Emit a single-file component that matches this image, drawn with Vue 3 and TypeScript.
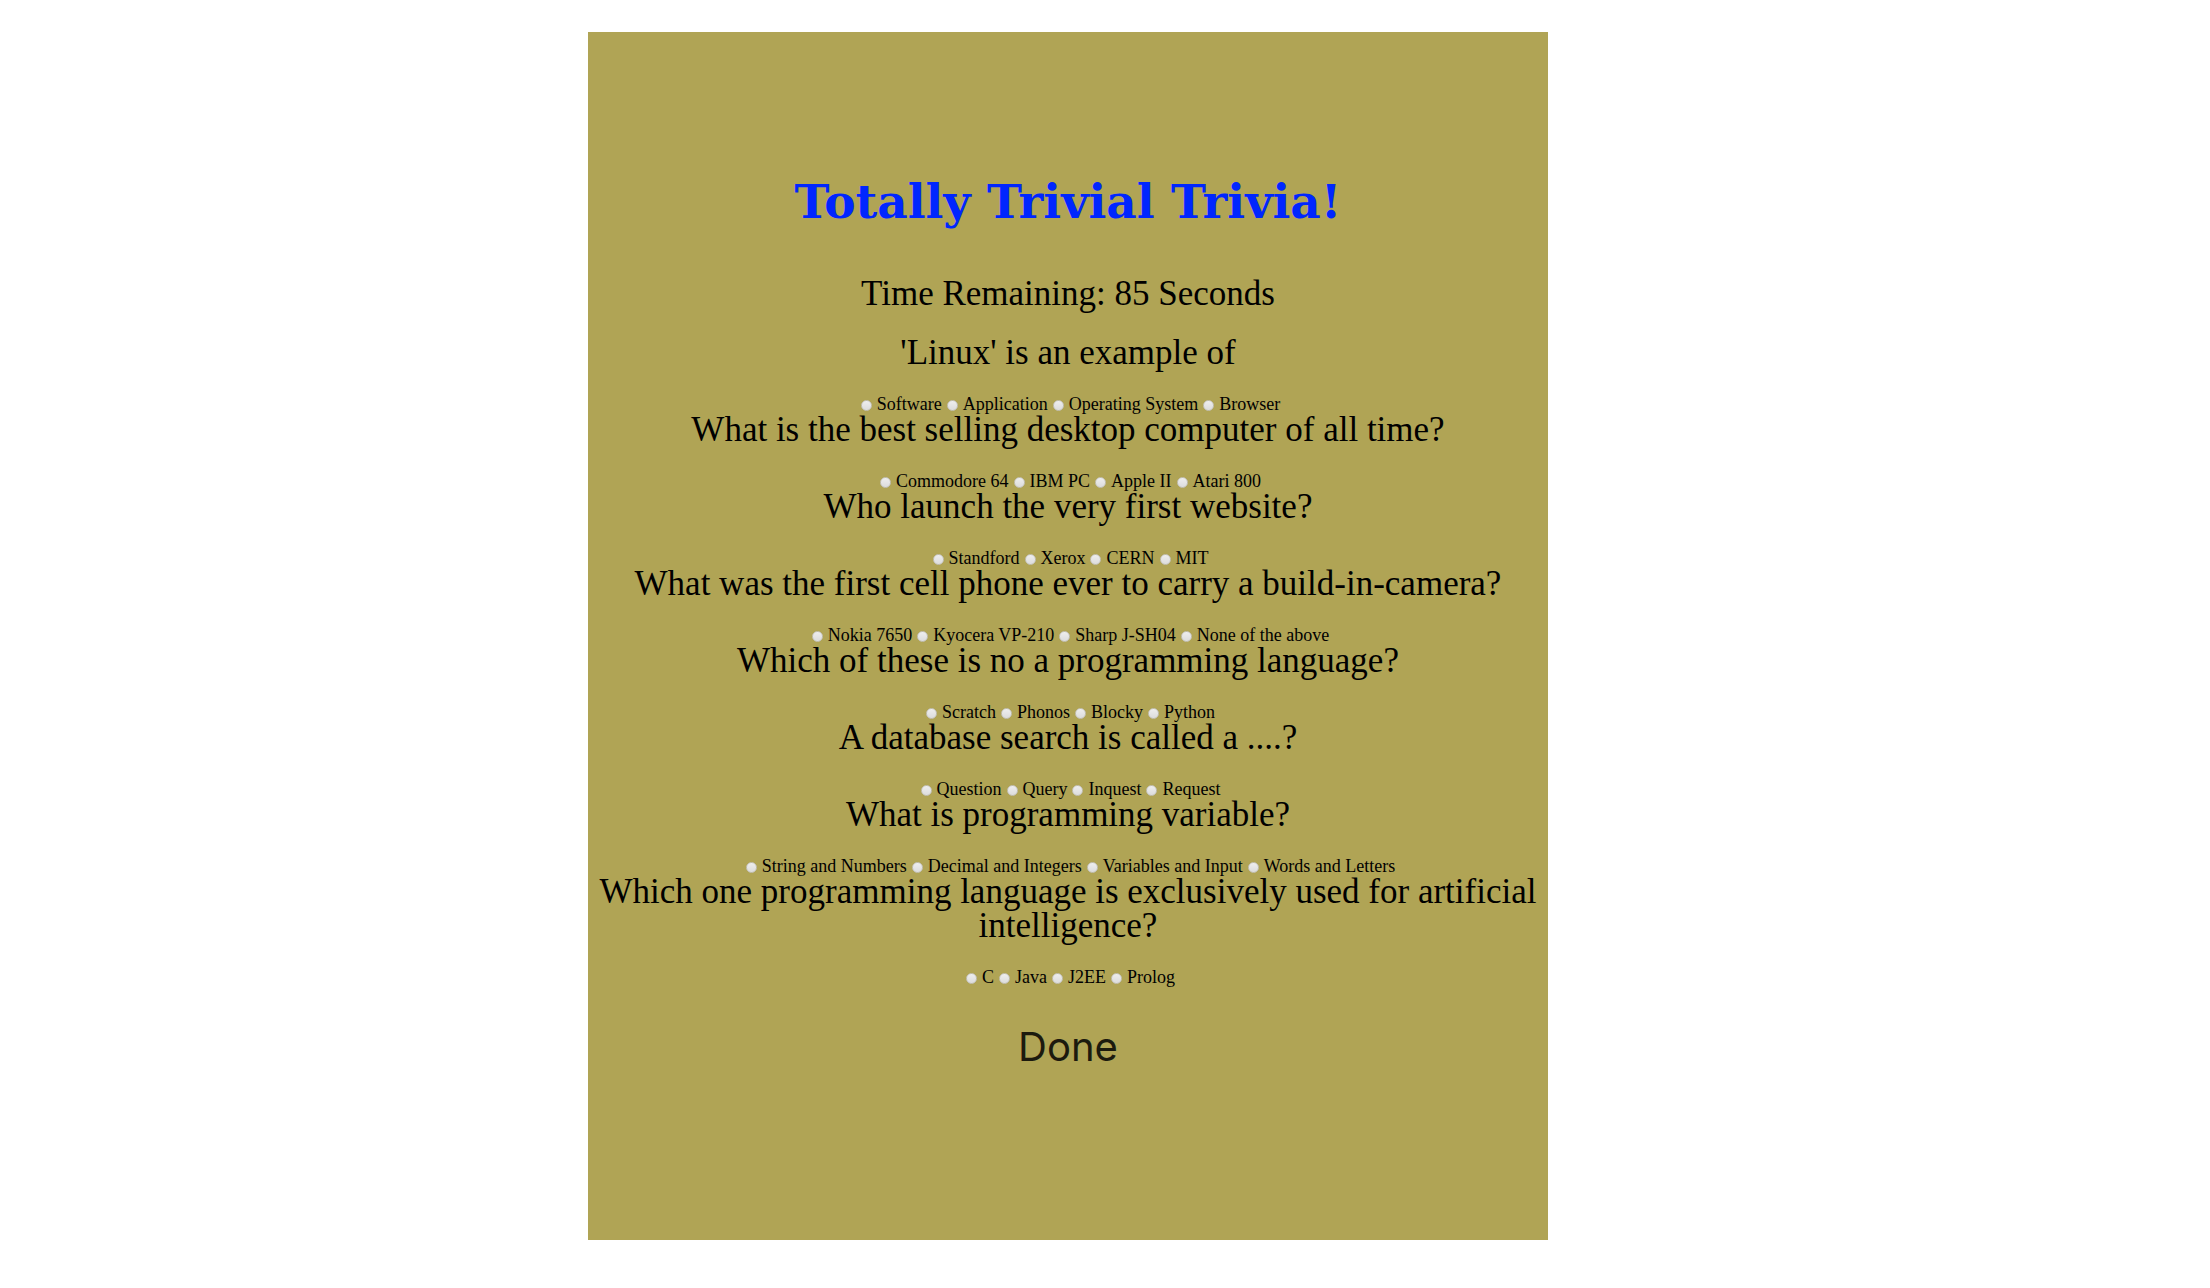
<script setup lang="ts">
import { ref } from 'vue'

interface Question {
  text: string
  options: string[]
}

const questions: Question[] = [
  { text: "'Linux' is an example of", options: ['Software', 'Application', 'Operating System', 'Browser'] },
  { text: 'What is the best selling desktop computer of all time?', options: ['Commodore 64', 'IBM PC', 'Apple II', 'Atari 800'] },
  { text: 'Who launch the very first website?', options: ['Standford', 'Xerox', 'CERN', 'MIT'] },
  { text: 'What was the first cell phone ever to carry a build-in-camera?', options: ['Nokia 7650', 'Kyocera VP-210', 'Sharp J-SH04', 'None of the above'] },
  { text: 'Which of these is no a programming language?', options: ['Scratch', 'Phonos', 'Blocky', 'Python'] },
  { text: 'A database search is called a ....?', options: ['Question', 'Query', 'Inquest', 'Request'] },
  { text: 'What is programming variable?', options: ['String and Numbers', 'Decimal and Integers', 'Variables and Input', 'Words and Letters'] },
  { text: 'Which one programming language is exclusively used for artificial intelligence?', options: ['C', 'Java', 'J2EE', 'Prolog'] },
]

const secondsLeft = ref(85)
const answers = ref<(string | undefined)[]>(questions.map(() => undefined))
</script>

<template>
  <main class="page">
    <form class="quiz" @submit.prevent>
      <h1 class="title">Totally Trivial Trivia!</h1>
      <p class="prompt">Time Remaining: {{ secondsLeft }} Seconds</p>

      <section v-for="(question, q) in questions" :key="q" role="radiogroup" :aria-labelledby="`question-${q}`">
        <h2 :id="`question-${q}`" class="prompt">{{ question.text }}</h2>
        <div class="options">
          <label v-for="option in question.options" :key="option" class="option">
            <input v-model="answers[q]" class="radio" type="radio" :name="`question-${q}`" :value="option" />{{ option }}
          </label>
        </div>
      </section>

      <button class="done" type="submit">Done</button>
    </form>
  </main>
</template>

<style>
body {
  margin: 0;
  background: #ffffff;
}
</style>

<style scoped>
.page {
  padding: 32px 74px 48px 0;
  font-family: "Liberation Serif", "Times New Roman", serif;
  color: #000000;
}

.quiz {
  box-sizing: border-box;
  display: flex;
  flex-direction: column;
  width: 100%;
  max-width: 960px;
  margin: 0 auto;
  padding: 138px 0 169px;
  background: #b0a455;
  text-align: center;
}

.title {
  margin: 0 0 43px;
  font-family: Georgia, "DejaVu Serif", serif;
  font-size: 47px;
  line-height: 64px;
  font-weight: 700;
  color: #0026ff;
}

.prompt {
  margin: 0 0 25px;
  font-size: 35px;
  line-height: 34px;
  font-weight: 400;
}

.options {
  display: flex;
  flex-wrap: wrap;
  justify-content: center;
  font-size: 18px;
  line-height: 18px;
}

.option {
  white-space: nowrap;
}

.radio {
  appearance: none;
  box-sizing: border-box;
  width: 11px;
  height: 11px;
  margin: 0 5px;
  border: 1px solid #c4c2b8;
  border-radius: 50%;
  background: linear-gradient(#eeeeee, #dcdcdc);
  vertical-align: -1px;
}

.radio:checked {
  background: radial-gradient(#222222 30%, #e4e4e4 36%);
}

.done {
  align-self: center;
  margin: 37px 0 0;
  padding: 0;
  border: 0;
  background: none;
  font-family: Inter, "Liberation Sans", sans-serif;
  font-size: 40px;
  line-height: 48px;
  color: #1c1a0e;
}
</style>
